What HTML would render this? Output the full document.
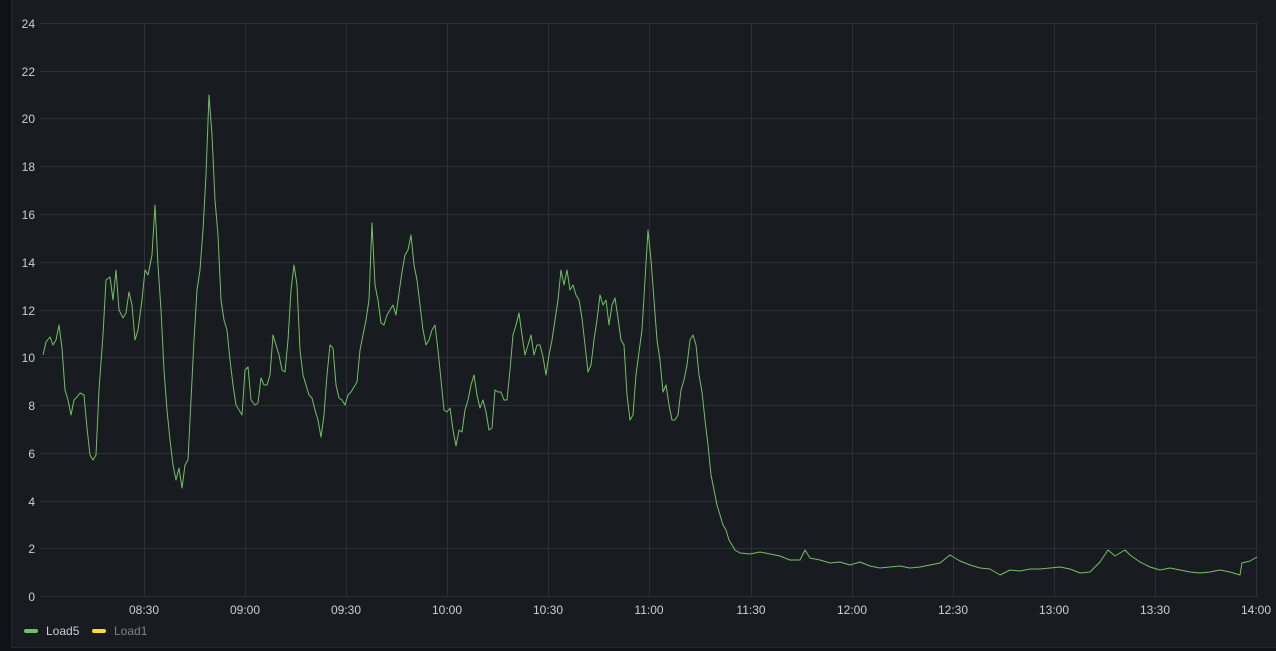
<!DOCTYPE html>
<html><head><style>
body{margin:0;width:1276px;height:651px;background:#111217;overflow:hidden;font-family:"Liberation Sans",sans-serif;}
.p{position:absolute;left:11px;top:-1px;width:1270px;height:649px;background:#181b1f;border:1px solid #24272d;box-sizing:border-box;}
svg{position:absolute;left:0;top:0}
</style></head><body>
<div class="p"></div>
<svg width="1276" height="651" font-family="Liberation Sans, sans-serif" font-size="12">
<g stroke="#2c2f35" stroke-width="1">
<line x1="40" x2="1258" y1="23.5" y2="23.5"/><line x1="40" x2="1258" y1="71.5" y2="71.5"/><line x1="40" x2="1258" y1="118.5" y2="118.5"/><line x1="40" x2="1258" y1="166.5" y2="166.5"/><line x1="40" x2="1258" y1="214.5" y2="214.5"/><line x1="40" x2="1258" y1="262.5" y2="262.5"/><line x1="40" x2="1258" y1="310.5" y2="310.5"/><line x1="40" x2="1258" y1="357.5" y2="357.5"/><line x1="40" x2="1258" y1="405.5" y2="405.5"/><line x1="40" x2="1258" y1="453.5" y2="453.5"/><line x1="40" x2="1258" y1="501.5" y2="501.5"/><line x1="40" x2="1258" y1="548.5" y2="548.5"/><line x1="40" x2="1258" y1="596.5" y2="596.5"/>
<line x1="144.5" x2="144.5" y1="23" y2="597"/><line x1="245.5" x2="245.5" y1="23" y2="597"/><line x1="346.5" x2="346.5" y1="23" y2="597"/><line x1="447.5" x2="447.5" y1="23" y2="597"/><line x1="548.5" x2="548.5" y1="23" y2="597"/><line x1="649.5" x2="649.5" y1="23" y2="597"/><line x1="751.5" x2="751.5" y1="23" y2="597"/><line x1="852.5" x2="852.5" y1="23" y2="597"/><line x1="953.5" x2="953.5" y1="23" y2="597"/><line x1="1054.5" x2="1054.5" y1="23" y2="597"/><line x1="1155.5" x2="1155.5" y1="23" y2="597"/><line x1="1256.5" x2="1256.5" y1="23" y2="597"/>
</g>
<g fill="#ccccdc" text-anchor="end">
<text x="35" y="28">24</text><text x="35" y="76">22</text><text x="35" y="123">20</text><text x="35" y="171">18</text><text x="35" y="219">16</text><text x="35" y="267">14</text><text x="35" y="315">12</text><text x="35" y="362">10</text><text x="35" y="410">8</text><text x="35" y="458">6</text><text x="35" y="506">4</text><text x="35" y="553">2</text><text x="35" y="601">0</text>
</g>
<g fill="#ccccdc" text-anchor="middle">
<text x="144" y="614">08:30</text><text x="245" y="614">09:00</text><text x="346" y="614">09:30</text><text x="447" y="614">10:00</text><text x="548" y="614">10:30</text><text x="649" y="614">11:00</text><text x="751" y="614">11:30</text><text x="852" y="614">12:00</text><text x="953" y="614">12:30</text><text x="1054" y="614">13:00</text><text x="1155" y="614">13:30</text><text x="1256" y="614">14:00</text>
</g>
<polyline fill="none" stroke="#73bf69" stroke-width="1" stroke-linejoin="round" points="43,355 46,342 50,337 53,345 56,340 59,325 62,348 65,390 68,400 71,415 74,400 77,397 80,393 84,395 87,428 90,455 93,460 96,455 99,390 103,335 106,280 110,277 113,300 116,270 119,310 123,318 126,313 129,292 132,305 135,340 138,330 142,300 145,270 148,275 152,255 155,205 158,265 161,310 164,370 167,410 170,440 173,465 176,480 179,468 182,488 185,465 188,460 191,400 194,340 197,290 200,270 203,230 206,175 209,95 212,135 215,200 218,235 221,300 224,320 227,330 230,360 233,385 236,405 239,410 242,415 245,370 248,367 251,400 255,405 258,403 261,378 264,385 267,385 270,375 273,335 276,345 279,355 282,370 285,372 288,340 291,290 294,265 297,285 300,350 303,375 306,385 309,395 312,398 315,410 318,420 321,437 324,415 327,375 330,345 333,348 336,385 339,398 342,400 345,405 348,395 351,392 354,387 357,382 360,350 363,335 366,320 369,300 372,223 375,285 378,300 381,323 384,325 387,315 390,310 393,305 396,315 399,293 402,272 405,255 408,250 411,235 414,265 417,280 420,305 423,330 426,345 429,340 432,330 435,325 438,350 441,380 444,410 447,412 450,408 453,430 456,446 459,430 462,432 465,410 468,400 471,385 474,375 477,395 480,408 483,400 486,412 489,430 492,428 495,390 498,392 501,392 504,400 507,400 510,370 513,335 516,325 519,313 522,335 525,355 528,345 531,335 534,355 537,345 540,345 543,357 546,375 549,355 552,340 555,320 558,300 561,270 564,285 567,270 570,290 573,285 576,295 579,300 582,318 585,345 588,372 591,365 594,340 597,320 600,295 603,305 606,300 609,325 612,305 615,298 618,318 621,340 624,345 627,395 630,420 633,415 636,375 639,352 642,330 645,280 648,230 651,260 654,300 657,340 660,360 663,392 666,385 669,405 672,420 675,420 678,415 681,390 684,380 687,365 690,340 693,335 696,345 699,375 702,392 705,420 708,445 711,475 714,490 717,505 720,515 723,525 726,530 729,540 732,545 735,550 740,553 750,554 760,552 770,554 780,556 790,560 800,560 805,550 810,558 820,560 830,563 840,562 850,565 860,562 870,566 880,568 890,567 900,566 910,568 920,567 930,565 940,563 950,555 960,561 970,565 980,568 990,569 1000,575 1010,570 1020,571 1030,569 1040,569 1050,568 1060,567 1070,569 1080,573 1090,572 1100,562 1108,550 1115,556 1125,550 1130,555 1140,562 1150,567 1160,570 1170,568 1180,570 1190,572 1200,573 1210,572 1220,570 1230,572 1240,575 1242,563 1250,561 1257,557"/>
<rect x="24" y="629" width="14" height="4" rx="2" fill="#73bf69"/>
<text x="46" y="635" fill="#ccccdc">Load5</text>
<rect x="92" y="629" width="14" height="4" rx="2" fill="#fade2a"/>
<text x="114" y="635" fill="#7f8084">Load1</text>
</svg>
</body></html>
